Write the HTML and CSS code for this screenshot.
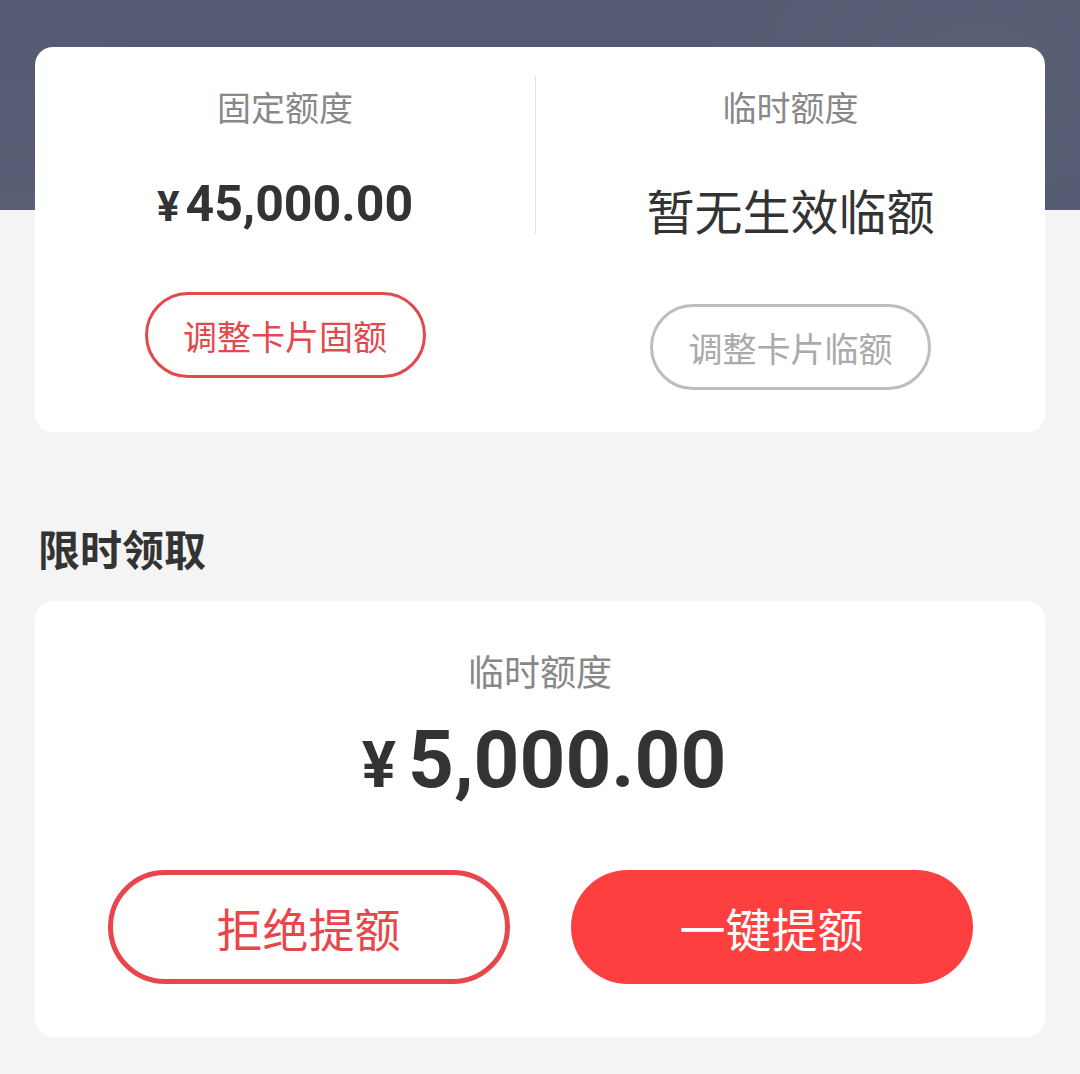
FILE: index.html
```html
<!DOCTYPE html>
<html lang="zh-CN">
<head>
  <meta charset="UTF-8">
  <title>额度管理</title>
  <link rel="stylesheet" href="styles.css">
</head>
<body>
  <div class="page">

    <div class="card quota">
      <div class="col">
        <div class="label">固定额度</div>
        <div class="value money"><span class="yen">¥</span>45,000.00</div>
        <button class="btn-outline red">调整卡片固额</button>
      </div>
      <div class="divider"></div>
      <div class="col">
        <div class="label">临时额度</div>
        <div class="value empty">暂无生效临额</div>
        <button class="btn-outline gray">调整卡片临额</button>
      </div>
    </div>

    <h2 class="section-title">限时领取</h2>

    <div class="card offer">
      <div class="label">临时额度</div>
      <div class="big-money"><span class="yen">¥</span>5,000.00</div>
      <div class="actions">
        <button class="btn-big reject">拒绝提额</button>
        <button class="btn-big accept">一键提额</button>
      </div>
    </div>

  </div>
</body>
</html>
```

FILE: styles.css
```css
body {
  margin: 0;
  font-family: Roboto, "Noto Sans CJK SC", sans-serif;
  color: #333;
}

.page {
  min-height: 1074px;
  padding: 47px 35px 0;
  box-sizing: border-box;
  background:
    radial-gradient(ellipse 420px 260px at 980px 60px, rgba(255,255,255,0.04), transparent 70%),
    radial-gradient(ellipse 500px 300px at 40px 230px, rgba(255,255,255,0.04), transparent 70%),
    linear-gradient(#535a71 0, #535a71 210px, #f4f4f4 210px);
}

.card {
  background: #fff;
  border-radius: 18px;
}

.label {
  font-family: "Noto Sans CJK SC", sans-serif;
  font-size: 34px;
  line-height: 44px;
  color: #888;
}

/* top card */
.quota {
  display: flex;
  align-items: flex-start;
  padding: 29px 0 42px;
}

.quota .col {
  display: flex;
  flex-direction: column;
  align-items: center;
}

.quota .col:first-child { width: 500px; }
.quota .col:last-child { flex: 1; }

.quota .label { margin-top: 9px; }

.divider {
  width: 1px;
  height: 158px;
  background: #e2e2e2;
}

.money {
  margin-top: 45px;
  font-size: 50px;
  line-height: 60px;
  font-weight: 700;
  color: #333;
}

.money .yen {
  font-size: 42px;
  margin-right: 6px;
}

.empty {
  margin-top: 50px;
  font-family: "Noto Sans CJK SC", sans-serif;
  font-size: 48px;
  line-height: 60px;
  color: #333;
}

.btn-outline {
  width: 281px;
  height: 86px;
  border-radius: 43px;
  background: #fff;
  font-family: "Noto Sans CJK SC", sans-serif;
  font-size: 34px;
  padding: 0;
}

.btn-outline.red {
  margin-top: 55px;
  border: 3px solid #e2494d;
  color: #e2494d;
}

.btn-outline.gray {
  margin-top: 65px;
  border: 3px solid #bdbdbd;
  color: #aaa;
}

/* section */
.section-title {
  margin: 88px 0 25px 3px;
  font-family: "Noto Sans CJK SC", sans-serif;
  font-size: 42px;
  line-height: 56px;
  font-weight: 700;
  color: #333;
}

.offer {
  display: flex;
  flex-direction: column;
  align-items: center;
  padding: 47px 0 53px;
}

.offer .label {
  font-size: 36px;
}

.big-money {
  margin-top: 18px;
  font-size: 80px;
  line-height: 100px;
  font-weight: 700;
  color: #333;
  padding-left: 8px;
}

.big-money .yen {
  font-size: 64px;
  margin-right: 12px;
}

.actions {
  display: flex;
  gap: 61px;
  margin-top: 54px;
}

.btn-big {
  width: 402px;
  height: 114px;
  border-radius: 57px;
  font-family: "Noto Sans CJK SC", sans-serif;
  font-size: 46px;
  padding: 0;
}

.reject {
  background: #fff;
  border: 5px solid #e8464a;
  color: #e8464a;
}

.accept {
  background: #fd3f40;
  border: none;
  color: #fff;
}
```
